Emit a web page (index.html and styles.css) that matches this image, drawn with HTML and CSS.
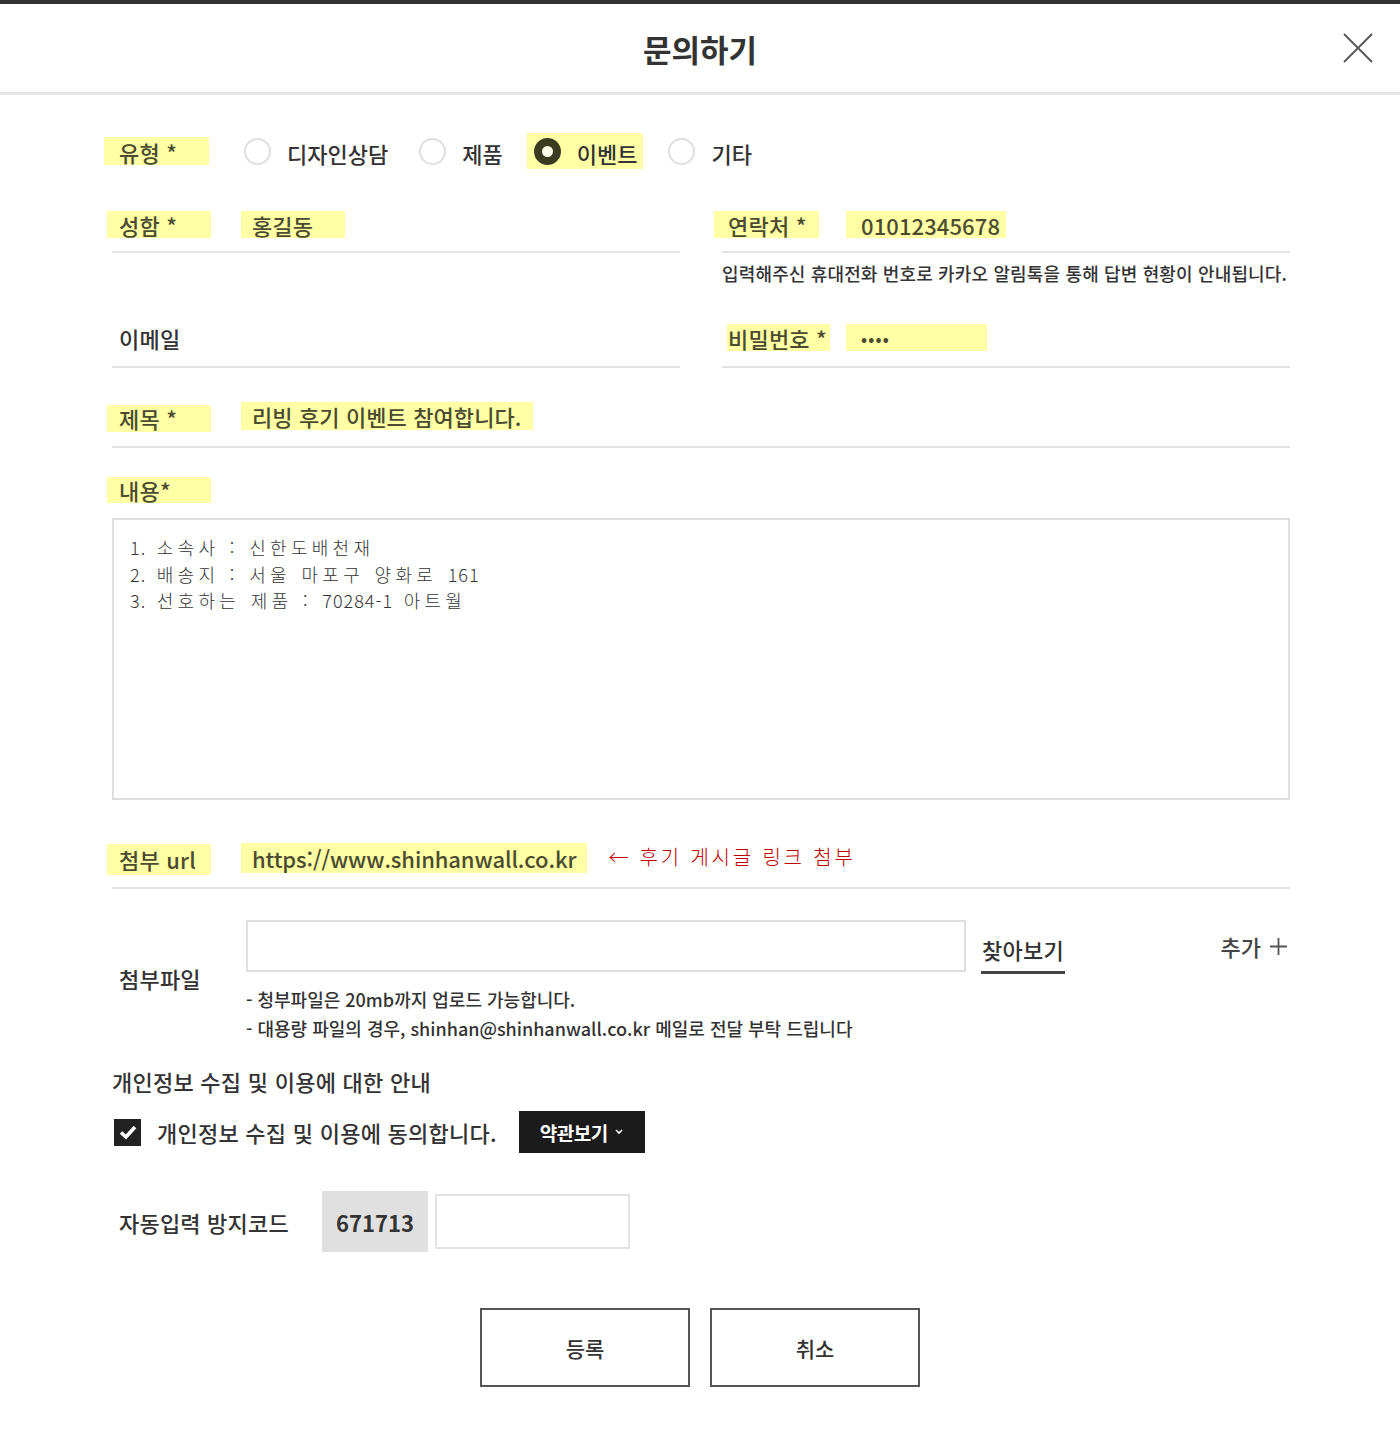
FILE: index.html
```html
<!DOCTYPE html>
<html lang="ko">
<head>
<meta charset="utf-8">
<title>문의하기</title>
<link rel="stylesheet" href="styles.css">
</head>
<body>
<div class="modal">
  <header class="head">
    <h1 class="title">문의하기</h1>
    <button class="close" aria-label="닫기">
      <svg width="32" height="32" viewBox="0 0 32 32"><path d="M2 2 L30 30 M30 2 L2 30" stroke="#555" stroke-width="1.8" fill="none"/></svg>
    </button>
  </header>

  <form class="form">
    <div class="row-type">
      <span class="lbl hl lbl-type">유형 *</span>
      <label class="radio"><span class="dot"></span><span>디자인상담</span></label>
      <label class="radio"><span class="dot"></span><span>제품</span></label>
      <label class="radio sel hl"><span class="dot"></span><span>이벤트</span></label>
      <label class="radio"><span class="dot"></span><span>기타</span></label>
    </div>

    <div class="grid two r2">
      <div class="col">
        <div class="field">
          <span class="lbl hl">성함 *</span>
          <span class="val hl v-name">홍길동</span>
        </div>
      </div>
      <div class="col">
        <div class="field rf">
          <span class="lbl hl lbl-tel">연락처 *</span>
          <span class="val hl v-tel">01012345678</span>
        </div>
        <p class="note">입력해주신 휴대전화 번호로 카카오 알림톡을 통해 답변 현황이 안내됩니다.</p>
      </div>
    </div>

    <div class="grid two r3">
      <div class="field f3">
        <span class="lbl plain">이메일</span>
      </div>
      <div class="field rf f3">
        <span class="lbl hl lbl-pw">비밀번호 *</span>
        <span class="val hl v-pw">••••</span>
      </div>
    </div>

    <div class="field f4">
      <span class="lbl hl">제목 *</span>
      <span class="val hl v-subj">리빙 후기 이벤트 참여합니다.</span>
    </div>

    <div class="content-lbl"><span class="lbl hl">내용*</span></div>
    <div class="textarea"><span class="num">1.</span> 소속사 : 신한도배천재
<span class="num">2.</span> 배송지 : 서울 마포구 양화로 <span class="num">161</span>
<span class="num">3.</span> 선호하는 제품 : <span class="num">70284-1</span> 아트월</div>

    <div class="field f6">
      <span class="lbl hl lbl-url">첨부 url</span>
      <span class="val hl v-url">https://www.shinhanwall.co.kr</span>
      <span class="memo">← 후기 게시글 링크 첨부</span>
    </div>

    <div class="file-row">
      <span class="lbl plain">첨부파일</span>
      <div class="file-block">
        <div class="file-line">
          <div class="file-input"></div>
          <span class="browse">찾아보기</span>
          <span class="add">추가 <svg width="19" height="19" viewBox="0 0 19 19"><path d="M9.5 1 V18 M1 9.5 H18" stroke="#555" stroke-width="1.8" fill="none"/></svg></span>
        </div>
        <p class="fnote">- 청부파일은 20mb까지 업로드 가능합니다.</p>
        <p class="fnote">- 대용량 파일의 경우, shinhan@shinhanwall.co.kr 메일로 전달 부탁 드립니다</p>
      </div>
    </div>

    <p class="privacy">개인정보 수집 및 이용에 대한 안내</p>
    <div class="agree">
      <span class="check"><svg width="20" height="20" viewBox="0 0 20 20"><path d="M3 10.5 L8 15 L17 5" stroke="#fff" stroke-width="3.6" fill="none"/></svg></span>
      <span class="agree-txt">개인정보 수집 및 이용에 동의합니다.</span>
      <span class="terms">약관보기 <svg width="10" height="8" viewBox="0 0 10 8"><path d="M2 2 L5 5 L8 2" stroke="#fff" stroke-width="1.6" fill="none"/></svg></span>
    </div>

    <div class="captcha">
      <span class="lbl plain cap-lbl">자동입력 방지코드</span>
      <span class="code">671713</span>
      <div class="cap-input"></div>
    </div>

    <div class="btns">
      <button type="button" class="btn">등록</button>
      <button type="button" class="btn">취소</button>
    </div>
  </form>
</div>
</body>
</html>
```

FILE: styles.css
```css
* { box-sizing: border-box; }
html, body { margin: 0; padding: 0; background: #fff; }
body {
  font-family: "Noto Sans CJK KR", "Noto Sans", sans-serif;
  font-weight: 500;
  color: #333;
  width: 1400px;
  height: 1443px;
  overflow: hidden;
}
p { margin: 0; }

.modal { border-top: 4px solid #333; }

.head {
  height: 91px;
  border-bottom: 3px solid #e6e6e6;
  display: flex;
  align-items: center;
  justify-content: center;
  position: relative;
}
.title {
  margin: 0;
  font-size: 31px;
  font-weight: 700;
  letter-spacing: 0;
  color: #333;
}
.close {
  position: absolute;
  right: 26px;
  top: 28px;
  border: 0;
  background: none;
  padding: 0;
  width: 32px;
  height: 32px;
}

.form { padding: 0 110px 0 112px; }

.hl { background: #ffffa6; color: #4b4b30; }

.lbl {
  display: inline-flex;
  align-items: center;
  font-size: 22px;
  letter-spacing: 0.2px;
  line-height: 1;
  white-space: nowrap;
}
.lbl.hl {
  width: 104px;
  height: 27px;
  padding-left: 12px;
  margin-left: -5px;
}
.lbl.plain { padding-left: 7px; }

.val {
  display: inline-flex;
  align-items: center;
  height: 27px;
  font-size: 22px;
  letter-spacing: 0.1px;
  padding: 0 11px;
  line-height: 1;
  white-space: nowrap;
}

/* row 1 */
.row-type {
  margin-top: 42px;
  display: flex;
  align-items: center;
  height: 28px;
}
.lbl.hl.lbl-type { margin-left: -8px; height: 28px; width: 105px; padding-left: 15px; padding-top: 2px; }
.radio {
  display: inline-flex;
  align-items: center;
  font-size: 22px;
  letter-spacing: 0;
  height: 36px;
  color: #333;
  padding-top: 3px;
}
.radio .dot {
  width: 27px;
  height: 27px;
  border-radius: 50%;
  border: 2px solid #dedede;
  margin-right: 16px;
  background: #fff;
  margin-top: -3px;
}
.row-type > .radio:nth-child(2) { margin-left: 35px; }
.row-type > .radio:nth-child(3) { margin-left: 31px; }
.row-type > .radio:nth-child(4) { margin-left: 24px; padding: 3px 6px 0 7px; }
.row-type > .radio:nth-child(5) { margin-left: 25px; }
.radio.sel .dot {
  border: 8px solid #3b3b22;
  background: #fdfde8;
}

/* grids */
.grid.two {
  display: grid;
  grid-template-columns: 568px 568px;
  column-gap: 42px;
}
.r2 { margin-top: 46px; }
.field {
  display: flex;
  align-items: center;
  border-bottom: 2px solid #e3e3e3;
}
.r2 .field { height: 42px; padding-bottom: 13px; }
.field .lbl { flex: 0 0 auto; }
.field > .lbl.hl + .val { margin-left: 30px; }
.v-name { width: 104px; }
.lbl.hl.lbl-tel { margin-left: -8px; padding-left: 14px; width: 105px; }
.field.rf > .lbl-tel + .val { margin-left: 27px; }
.v-tel { width: 160px; padding-left: 15px; font-size: 22px; letter-spacing: 0.1px; }
.note {
  margin-top: 10px;
  font-size: 18px;
  line-height: 20px;
  letter-spacing: 0.15px;
  color: #333;
  white-space: nowrap;
}

.r3 { margin-top: 41px; }
.f3 { height: 44px; padding-bottom: 15px; }
.lbl.hl.lbl-pw { margin-left: 5px; padding-left: 1px; width: 103px; }
.field.rf > .lbl-pw + .val { margin-left: 16px; }
.v-pw { width: 141px; padding-left: 15px; font-size: 16px; font-weight: 700; letter-spacing: 1.2px; }

.f4 { margin-top: 35px; height: 45px; padding-bottom: 13px; }
.v-subj { height: 28px; margin-top: -4px; }

.content-lbl { margin-top: 29px; height: 26px; display: flex; }
.content-lbl .lbl.hl { height: 26px; }

.textarea {
  margin-top: 15px;
  height: 282px;
  border: 2px solid #dedede;
  padding: 14px 16px;
  white-space: pre;
  font-size: 18px;
  line-height: 26.5px;
  letter-spacing: 4.3px;
  word-spacing: 1.2px;
  color: #333;
  font-weight: 300;
}
.textarea .num { letter-spacing: 1px; }

.f6 { margin-top: 43px; height: 46px; padding-bottom: 12px; }
.lbl.hl.lbl-url { height: 31px; }
.f6 > .lbl.hl + .val { margin-top: -3px; }
.v-url { height: 30px; font-size: 22px; letter-spacing: -0.1px; padding: 0 11px; }
.memo {
  margin-left: 21px;
  margin-top: -6px;
  font-size: 20px;
  letter-spacing: 2.8px;
  color: #c00000;
  font-weight: 300;
  white-space: nowrap;
}

.file-row {
  margin-top: 31px;
  display: flex;
  align-items: center;
}
.file-row .lbl.plain { width: 134px; margin-top: -8px; }
.file-block { flex: 1; }
.file-line { display: flex; align-items: center; height: 52px; }
.file-input {
  width: 720px;
  height: 52px;
  border: 2px solid #dedede;
}
.browse {
  margin-left: 15px;
  font-size: 22px;
  letter-spacing: 0.3px;
  padding-bottom: 6px;
  border-bottom: 3px solid #444;
  margin-top: 14px;
  width: 84px;
  text-align: center;
}
.add {
  margin-left: auto;
  margin-right: 2px;
  font-size: 22px;
  letter-spacing: 0;
  color: #444;
  display: inline-flex;
  align-items: center;
  gap: 8px;
}
.fnote {
  font-size: 18px;
  line-height: 29px;
  letter-spacing: 0;
  color: #333;
  white-space: nowrap;
}
.file-line + .fnote { margin-top: 13px; }

.privacy {
  margin-top: 25px;
  font-size: 22px;
  line-height: 26px;
  letter-spacing: 0.25px;
}
.agree {
  margin-top: 17px;
  display: flex;
  align-items: center;
  height: 42px;
}
.check {
  margin-left: 2px;
  width: 27px;
  height: 27px;
  background: #222;
  display: inline-flex;
  align-items: center;
  justify-content: center;
}
.agree-txt {
  margin-left: 16px;
  font-size: 22px;
  letter-spacing: 0.25px;
}
.terms {
  margin-left: 22px;
  height: 42px;
  width: 126px;
  background: #1b1b1b;
  color: #fff;
  font-weight: 700;
  font-size: 19px;
  letter-spacing: -0.5px;
  display: inline-flex;
  align-items: center;
  justify-content: center;
  gap: 6px;
}

.captcha {
  margin-top: 38px;
  display: flex;
  align-items: center;
  height: 61px;
}
.cap-lbl { width: 210px; }
.code {
  width: 106px;
  height: 61px;
  background: #e0e0e0;
  font-weight: 700;
  font-size: 22px;
  display: inline-flex;
  align-items: center;
  justify-content: center;
}
.cap-input {
  margin-left: 7px;
  width: 195px;
  height: 55px;
  border: 2px solid #e3e3e3;
}

.btns {
  margin-top: 56px;
  display: flex;
  justify-content: center;
  gap: 20px;
  margin-left: -2px;
}
.btn {
  width: 210px;
  height: 79px;
  border: 2px solid #555;
  background: #fff;
  font-family: "Noto Sans CJK KR", sans-serif;
  font-weight: 500;
  font-size: 21px;
  letter-spacing: 0;
  color: #333;
}
```
